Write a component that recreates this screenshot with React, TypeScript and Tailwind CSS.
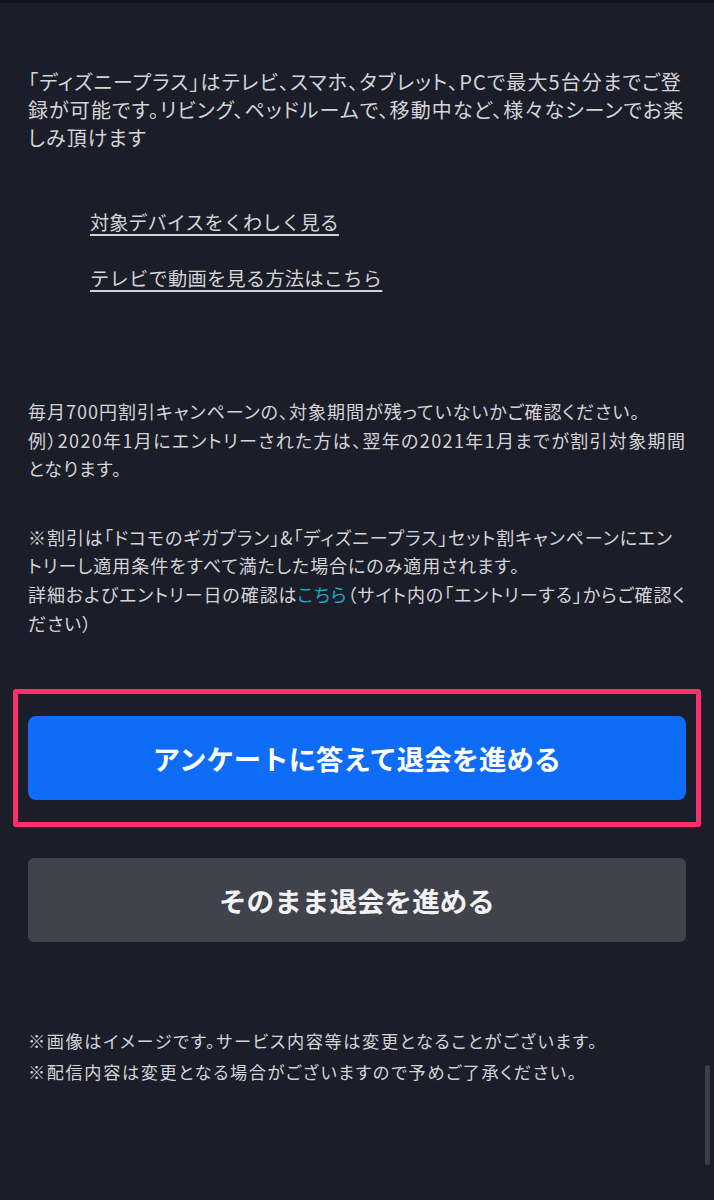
import React from "react";

const font = {
  fontFamily: '"Noto Sans CJK JP", "Noto Sans", sans-serif',
};

function Lines({ lines, className }: { lines: React.ReactNode[]; className: string }) {
  return (
    <div className={className}>
      {lines.map((l, i) => (
        <div key={i} className="whitespace-nowrap">
          {l}
        </div>
      ))}
    </div>
  );
}

export default function App() {
  return (
    <div
      className="relative min-h-[1200px] w-full overflow-hidden bg-[#1b1d28] text-[#d3d4d8]"
      style={font}
    >
      {/* thin darker strip along the top edge */}
      <div className="h-[3px] w-full bg-[#12141c]" />

      <main className="px-[28px] pt-[65px]">
        <Lines
          className="text-[20px] leading-[28px] tracking-[1.1px] [font-feature-settings:'palt']"
          lines={[
            "「ディズニープラス」はテレビ、スマホ、タブレット、PCで最大5台分までご登",
            "録が可能です。リビング、ペッドルームで、移動中など、様々なシーンでお楽",
            "しみ頂けます",
          ]}
        />

        <div className="mt-[56px] flex flex-col gap-[28px] pl-[62px] text-[19.2px] leading-[28px]">
          <a href="#" className="w-fit underline underline-offset-[4px] decoration-[1.5px]">
            対象デバイスをくわしく見る
          </a>
          <a href="#" className="w-fit tracking-[0.3px] underline underline-offset-[4px] decoration-[1.5px]">
            テレビで動画を見る方法はこちら
          </a>
        </div>

        <Lines
          className="mt-[105px] text-[18px] leading-[28.5px] tracking-[1px] [font-feature-settings:'palt']"
          lines={[
            "毎月700円割引キャンペーンの、対象期間が残っていないかご確認ください。",
            <span className="tracking-[1.35px]">
              例）2020年1月にエントリーされた方は、翌年の2021年1月までが割引対象期間
            </span>,
            "となります。",
          ]}
        />

        <Lines
          className="mt-[40px] text-[18px] leading-[28.7px] tracking-[0.95px] [font-feature-settings:'palt']"
          lines={[
            "※割引は「ドコモのギガプラン」&「ディズニープラス」セット割キャンペーンにエン",
            "トリーし適用条件をすべて満たした場合にのみ適用されます。",
            <>
              詳細およびエントリー日の確認は
              <a href="#" className="text-[#1ea7bd]">
                こちら
              </a>
              （サイト内の「エントリーする」からご確認く
            </>,
            "ださい）",
          ]}
        />

        {/* highlighted primary action */}
        <div className="mx-[-15px] mt-[52px] rounded-[3px] border-[5px] border-[#fe2f6a] px-[10px] py-[22px]">
          <button
            type="button"
            className="flex h-[84px] w-full items-center justify-center rounded-[8px] bg-[#0f6cf7] text-[27.4px] font-bold text-white"
          >
            アンケートに答えて退会を進める
          </button>
        </div>

        <button
          type="button"
          className="mt-[31px] flex h-[84px] w-full items-center justify-center rounded-[6px] bg-[#40434b] text-[27.6px] font-bold text-[#f2f2f4]"
        >
          そのまま退会を進める
        </button>

        <div className="mt-[83px] text-[17.2px] leading-[31px] tracking-[1.6px] [font-feature-settings:'palt']">
          <p>※画像はイメージです。サービス内容等は変更となることがございます。</p>
          <p>※配信内容は変更となる場合がございますので予めご了承ください。</p>
        </div>
      </main>

      {/* scroll indicator */}
      <div className="absolute right-[4px] top-[1065px] h-[100px] w-[5px] rounded-full bg-[#3b3e49]" />
    </div>
  );
}
